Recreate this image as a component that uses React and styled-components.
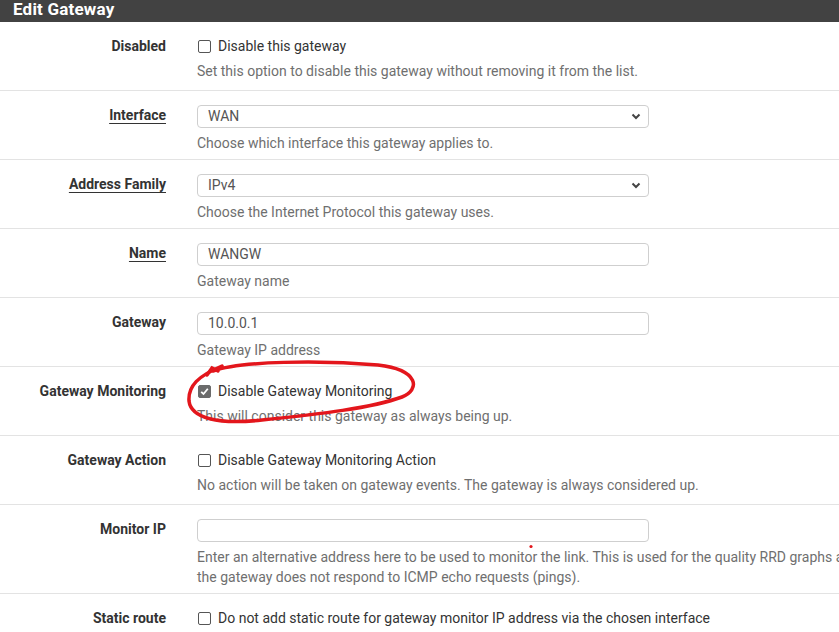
import styled, { createGlobalStyle } from "styled-components";

const GlobalStyle = createGlobalStyle`
    html, body {
        margin:0;
        padding:0;
        background:#fff;
        overflow:hidden;
        font-family:Roboto, "Liberation Sans", sans-serif;
    }
`;

const rows = [
    { label: "Disabled", kind: "check", text: "Disable this gateway", help: ["Set this option to disable this gateway without removing it from the list."] },
    { label: "Interface", link: true, kind: "select", value: "WAN", help: ["Choose which interface this gateway applies to."] },
    { label: "Address Family", link: true, kind: "select", value: "IPv4", help: ["Choose the Internet Protocol this gateway uses."] },
    { label: "Name", link: true, kind: "input", value: "WANGW", help: ["Gateway name"] },
    { label: "Gateway", kind: "input", value: "10.0.0.1", help: ["Gateway IP address"] },
    { label: "Gateway Monitoring", kind: "check", checked: true, text: "Disable Gateway Monitoring", help: ["This will consider this gateway as always being up."] },
    { label: "Gateway Action", kind: "check", text: "Disable Gateway Monitoring Action", help: ["No action will be taken on gateway events. The gateway is always considered up."] },
    {
        label: "Monitor IP",
        kind: "input",
        value: "",
        help: [
            "Enter an alternative address here to be used to monitor the link. This is used for the quality RRD graphs as well as the load balancer entries. Use this if",
            "the gateway does not respond to ICMP echo requests (pings).",
        ],
    },
    { label: "Static route", kind: "check", text: "Do not add static route for gateway monitor IP address via the chosen interface", help: [] },
];

const App = () => {
    return (
        <Page>
            <GlobalStyle />
            <Header>Edit Gateway</Header>
            {rows.map((r) => (
                <Row key={r.label}>
                    <Label $link={r.link}>{r.label}</Label>
                    <Field>
                        {r.kind === "check" && (
                            <CheckLine>
                                <Box $checked={r.checked}>
                                    {r.checked && (
                                        <svg width="9" height="9" viewBox="0 0 9 9">
                                            <polyline points="1.2,4.8 3.5,7 7.8,1.8" fill="none" stroke="#fff" strokeWidth="1.8" />
                                        </svg>
                                    )}
                                </Box>
                                {r.text}
                            </CheckLine>
                        )}
                        {r.kind === "select" && (
                            <Control>
                                {r.value}
                                <Chevron width="10" height="7" viewBox="0 0 10 7">
                                    <polyline points="1.5,1.5 5,5 8.5,1.5" fill="none" stroke="#444" strokeWidth="2" />
                                </Chevron>
                            </Control>
                        )}
                        {r.kind === "input" && <Control>{r.value}</Control>}
                        {r.help.length > 0 && (
                            <Help>
                                {r.help.map((h) => (
                                    <div key={h}>{h}</div>
                                ))}
                            </Help>
                        )}
                    </Field>
                </Row>
            ))}
            <Scribble width="839" height="632" viewBox="0 0 839 632">
                <path
                    d="M 213 371 C 240 361, 320 360, 378 365 C 420 370, 420 390, 402 397 C 372 408, 320 414, 262 420 C 218 425, 191 418, 189 401 C 188 386, 198 376, 222 366"
                    fill="none"
                    stroke="#e3161c"
                    strokeWidth="3.5"
                    strokeLinecap="round"
                />
                <path d="M 207 375 L 212 368 L 218 371" fill="none" stroke="#e3161c" strokeWidth="3.5" strokeLinecap="round" />
                <circle cx="531" cy="546.5" r="1.6" fill="#e3161c" />
            </Scribble>
        </Page>
    );
};

const Page = styled.div`
    position:relative;
    width:839px;
    height:632px;
    overflow:hidden;
`;

const Header = styled.div`
    height:22px;
    background:#424242;
    color:#fff;
    font-weight:bold;
    font-size:17px;
    line-height:19px;
    padding-left:13px;
    letter-spacing:0.2px;
`;

const Row = styled.div`
    display:grid;
    grid-template-columns:166px 1fr;
    column-gap:31px;
    box-sizing:border-box;
    min-height:69px;
    padding:14px 0 6px;
    border-bottom:1px solid #e3e3e3;
`;

const Label = styled.div`
    text-align:right;
    font-weight:bold;
    font-size:14px;
    line-height:20px;
    color:#333;
    white-space:nowrap;
    text-decoration:${(p) => (p.$link ? "underline" : "none")};
    text-underline-offset:3px;
`;

const Field = styled.div`
    display:flex;
    flex-direction:column;
    min-width:0;
`;

const CheckLine = styled.div`
    display:flex;
    align-items:center;
    gap:7px;
    font-size:14px;
    line-height:20px;
    color:#333;
    white-space:nowrap;
    padding-left:1px;
`;

const Box = styled.span`
    display:inline-flex;
    align-items:center;
    justify-content:center;
    width:13px;
    height:13px;
    box-sizing:border-box;
    border-radius:2px;
    border:1px solid ${(p) => (p.$checked ? "#6b6b6b" : "#555")};
    background:${(p) => (p.$checked ? "#6b6b6b" : "#fff")};
`;

const Control = styled.div`
    position:relative;
    width:452px;
    height:23px;
    box-sizing:border-box;
    border:1px solid #cfcfcf;
    border-radius:4px;
    padding-left:10px;
    font-size:14px;
    line-height:21px;
    color:#555;
`;

const Chevron = styled.svg`
    position:absolute;
    right:7px;
    top:7px;
`;

const Help = styled.div`
    margin-top:5px;
    font-size:14px;
    line-height:20px;
    color:#6f6f6f;
    white-space:nowrap;
`;

const Scribble = styled.svg`
    position:absolute;
    left:0;
    top:0;
    pointer-events:none;
`;

export default App;
